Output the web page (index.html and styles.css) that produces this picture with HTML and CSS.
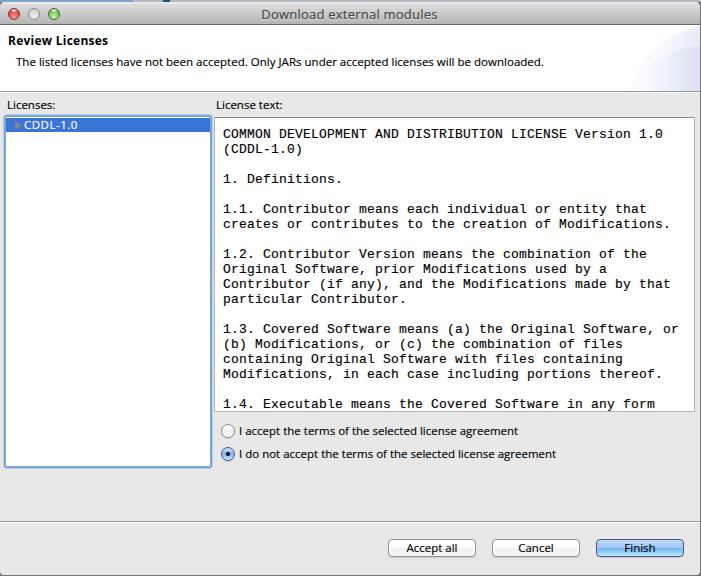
FILE: index.html
```html
<!DOCTYPE html>
<html lang="en">
<head>
<meta charset="utf-8">
<title>Download external modules</title>
<link rel="stylesheet" href="styles.css">
</head>
<body>
<div class="backdrop"></div>
<main class="window">
  <div class="titlebar">
    <div class="lights"><i class="light red"></i><i class="light gray"></i><i class="light green"></i></div>
    <span class="title">Download external modules</span>
  </div>
  <header class="banner">
    <svg class="swoosh" width="80" height="66" viewBox="0 0 80 66">
      <defs>
        <linearGradient id="outer"><stop offset="0" stop-color="#fff"/><stop offset=".4" stop-color="#f9fafe"/><stop offset="1" stop-color="#eaeefa"/></linearGradient>
        <linearGradient id="middle"><stop offset="0" stop-color="#fff" stop-opacity="0"/><stop offset="1" stop-color="#e5eaf8"/></linearGradient>
        <linearGradient id="inner"><stop offset="0" stop-color="#fff"/><stop offset=".3" stop-color="#f7f9fd"/><stop offset="1" stop-color="#dae1f5"/></linearGradient>
      </defs>
      <path d="M4 66C18 34 43 9 80 1V66Z" fill="url(#outer)"/>
      <path d="M28 66C35 34 54 8 80 1V66Z" fill="url(#middle)"/>
      <path d="M7 66C24 40 48 24 80 21V66Z" fill="url(#inner)"/>
    </svg>
    <h1>Review Licenses</h1>
    <p>The listed licenses have not been accepted. Only JARs under accepted licenses will be downloaded.</p>
  </header>
  <section class="content">
    <div class="left">
      <div class="label">Licenses:</div>
      <div class="tree"><div class="row"><svg width="7" height="9" viewBox="0 0 7 9"><path d="M0 0L7 4.5L0 9Z" fill="#858585"/></svg><span class="item">CDDL-1.0</span></div></div>
    </div>
    <div class="right">
      <div class="label">License text:</div>
      <pre class="license">COMMON DEVELOPMENT AND DISTRIBUTION LICENSE Version 1.0
(CDDL-1.0)

1. Definitions.

1.1. Contributor means each individual or entity that
creates or contributes to the creation of Modifications.

1.2. Contributor Version means the combination of the
Original Software, prior Modifications used by a
Contributor (if any), and the Modifications made by that
particular Contributor.

1.3. Covered Software means (a) the Original Software, or
(b) Modifications, or (c) the combination of files
containing Original Software with files containing
Modifications, in each case including portions thereof.

1.4. Executable means the Covered Software in any form</pre>
      <div class="choice"><i class="radio"></i><span>I accept the terms of the selected license agreement</span></div>
      <div class="choice"><i class="radio on"></i><span>I do not accept the terms of the selected license agreement</span></div>
    </div>
  </section>
  <footer class="actions">
    <button class="btn">Accept all</button>
    <button class="btn">Cancel</button>
    <button class="btn primary">Finish</button>
  </footer>
</main>
</body>
</html>
```
FILE: styles.css
```css
* { box-sizing: border-box; }
html, body { margin: 0; width: 701px; height: 576px; overflow: hidden; }
body { background: #777; font: 11.5px/14px "Open Sans", "Noto Sans", sans-serif; color: #000; -webkit-text-stroke: .15px; display: flex; flex-direction: column; }
.backdrop { height: 2px; flex: none; background: linear-gradient(90deg, transparent 163px, #1d527e 163px, #1d527e 170px, transparent 170px), linear-gradient(90deg, #7fa3c9 133px, #b5b9c0 133px); }
.window { width: 700px; height: 573px; background: #e8e8e8; border-radius: 5px 5px 4px 4px; overflow: hidden; display: flex; flex-direction: column; }
.titlebar { height: 23px; flex: none; display: grid; grid-template-columns: 1fr; align-items: center; background: linear-gradient(#f2f2f2 0, #dedede 2px, #b4b4b4 22px); border-bottom: 1px solid #686868; }
.lights, .title { grid-area: 1 / 1; }
.lights { display: flex; gap: 8px; padding: 1px 0 0 8px; }
.light { width: 12px; height: 12px; border-radius: 50%; border: 1px solid #777; }
.red { background: radial-gradient(ellipse 4px 2px at 50% 15%, #fff, transparent), radial-gradient(circle at 50% 80%, #ff9a90, #e34a48 60%, #b52b2b); border-color: #803c3c; }
.gray { background: radial-gradient(circle at 50% 80%, #efefef, #c8c8c8); border-color: #888; }
.green { background: radial-gradient(ellipse 4px 2px at 50% 15%, #fff, transparent), radial-gradient(circle at 50% 80%, #caf5a0, #78bf5c 60%, #4b9138); border-color: #486d3c; }
.title { justify-self: center; font-size: 13px; letter-spacing: .23px; color: #464646; text-shadow: 0 1px #ddd; padding-top: 1px; margin-right: 1px; }
.banner { position: relative; height: 67px; flex: none; background: #fff; border-bottom: 1px solid #989898; padding: 9px 8px 0; }
.swoosh { position: absolute; right: 0; top: 0; }
h1 { margin: 0; font-size: 12px; line-height: 14px; letter-spacing: .25px; -webkit-text-stroke: 0; }
p { margin: 7px 0 0 8px; white-space: nowrap; letter-spacing: .015px; }
.content { display: flex; height: 429px; flex: none; padding: 6px 5px 0 4px; box-shadow: inset 0 1px #f8f8f8; }
.left { width: 208px; }
.right { width: 481px; margin-left: 2px; }
.label { padding-left: 3px; height: 14px; }
.right .label { padding-left: 2px; }
.tree { margin: 3px 0 0; height: 353px; border: 2px solid #7ba7d7; border-radius: 3px; box-shadow: 0 0 0 1px #b6cce5; background: #fff; }
.row { height: 14px; margin-top: 1px; background: #3875d7; color: #fff; display: flex; align-items: center; gap: 2px; padding-left: 9px; }
.item { letter-spacing: .5px; }
.license { margin: 5px 0 0; height: 295px; overflow: hidden; background: #fff; border: 1px solid #b5b5b5; border-top-color: #8c8c8c; padding: 9px 8px 0; font: 13px/15px "Liberation Mono", monospace; letter-spacing: .2px; }
.choice { display: flex; align-items: center; gap: 4px; height: 14px; margin: 12px 0 9px 7px; white-space: nowrap; }
.choice + .choice { margin-top: 0; }
.radio { width: 14px; height: 14px; border: 1px solid #8b8b8b; border-radius: 50%; background: linear-gradient(#fff, #eee 50%, #fff); box-shadow: 0 1px 1px #ccc; }
.radio.on { border-color: #4e5790; background: radial-gradient(circle, #10142b 1.8px, transparent 2.4px), linear-gradient(#cfe3f8, #79b5ef 50%, #c4f0ff); }
.actions { flex: 1; border-top: 1px solid #989898; box-shadow: inset 0 1px #fff; display: flex; justify-content: flex-end; gap: 16px; padding: 17px 16px 0 0; }
.btn { width: 88px; height: 18px; padding: 0; border: 1px solid #929292; border-radius: 4px; background: linear-gradient(#fff, #fff 48%, #efefef 52%, #f8f8f8); font: inherit; line-height: 14px; color: #000; box-shadow: 0 1px 1px #ccc; }
.primary { border-color: #4e5790; background: linear-gradient(#bdd9f6, #9cc7f3 48%, #74b1ef 52%, #b8edff); }
```
